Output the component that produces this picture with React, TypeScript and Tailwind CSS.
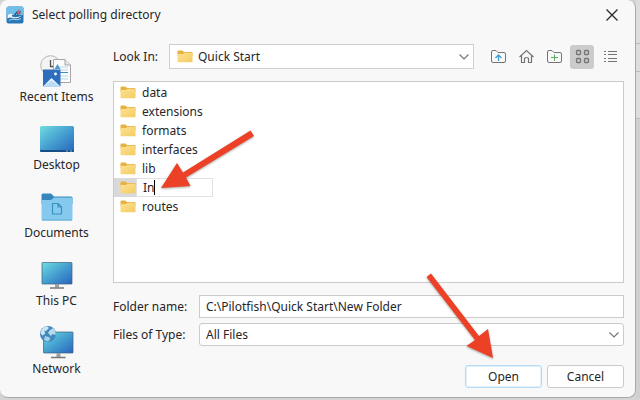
import type { ReactNode } from 'react';
import { useState } from 'react';

function FolderIcon() {
  return (
    <svg viewBox="0 0 16 13" className="h-[13px] w-4 shrink-0" aria-hidden="true">
      <path d="M0.5 1.2Q0.5 0.4 1.3 0.4H5.4L7 1.9H14.7Q15.5 1.9 15.5 2.7V6H0.5Z" fill="#e8b243" />
      <path d="M0.5 4H6L7.6 2.7H14.8Q15.5 2.7 15.5 3.4V11.5Q15.5 12.2 14.8 12.2H1.2Q0.5 12.2 0.5 11.5Z" fill="url(#folder)" />
      <defs>
        <linearGradient id="folder" x1="0" y1="0" x2="1" y2="1">
          <stop offset="0" stopColor="#fde293" />
          <stop offset="1" stopColor="#f4cb62" />
        </linearGradient>
      </defs>
    </svg>
  );
}

function Chevron() {
  return (
    <svg viewBox="0 0 10 6" className="pointer-events-none absolute right-[5px] top-1/2 h-[6px] w-[10px] -translate-y-1/2" fill="none" stroke="#77777b" strokeWidth="1.2" aria-hidden="true">
      <path d="M0.5 0.5L5 5L9.5 0.5" />
    </svg>
  );
}

function ScreenGradient({ id }: { id: string }) {
  return (
    <defs>
      <linearGradient id={id} x1="0" y1="0" x2="1" y2="1">
        <stop offset="0" stopColor="#70dce0" />
        <stop offset="0.5" stopColor="#459fd0" />
        <stop offset="1" stopColor="#2864bd" />
      </linearGradient>
    </defs>
  );
}

function AppIcon() {
  return (
    <svg viewBox="0 0 18 18" className="size-[18px]" aria-hidden="true">
      <rect x="0.5" y="0.5" width="17" height="17" rx="2" fill="#2878b8" />
      <path d="M0.5 2.5Q0.5 0.5 2.5 0.5H15.5Q17.5 0.5 17.5 2.5V9H0.5Z" fill="#70bfe8" />
      <path d="M1.5 9.5Q4 6.5 7 8.5Q5 9 6 10.5Q10 12.5 16 9.5Q12 13 7 12Q3.5 11 1.5 12.5Z" fill="#f2f8fc" />
      <path d="M3 14.5Q6 12.5 9 13.5Q12 14.5 15 12.5" fill="none" stroke="#b8dcf2" strokeWidth="0.9" />
      <path d="M8.5 9L11.5 5.5M11 9.5L14.5 5" stroke="#284c83" strokeWidth="1.2" />
      <path d="M12.5 3.5L13.5 8.5M10.5 7.5L15.5 7" stroke="#c9565c" strokeWidth="1.1" />
    </svg>
  );
}

function RecentIcon() {
  return (
    <svg viewBox="0 0 36 36" className="size-9" aria-hidden="true">
      <circle cx="11.5" cy="13.5" r="9.8" fill="#f4f4f4" stroke="#b6b6b8" />
      <path d="M11.5 8V14.5H16" fill="none" stroke="#555" strokeWidth="1.3" />
      <path d="M14.5 7.5H26L31.5 13V30.5H14.5Z" fill="#fbfbfb" stroke="#a6a6a8" />
      <path d="M26 7.5V13H31.5" fill="#e7e7e7" stroke="#a6a6a8" />
      <path d="M21 15H29M21 18H29M21 24H29M21 27H29" stroke="#b8d9ec" />
      <path d="M21 20.5H29" stroke="#358fc8" />
      <path d="M15.5 17L18.5 12L21.5 17Z" fill="#4b9ad2" />
      <path d="M4 17.5H21.5V34.5H4Z" fill="#2e6fbd" />
      <path d="M4 34.5L12.5 26L21.5 34.5Z" fill="#eaf5ff" />
      <path d="M4 34.5L12.5 28.5L21.5 34.5Z" fill="#b9ddf7" />
      <circle cx="16.5" cy="22" r="1.4" fill="#fff" />
    </svg>
  );
}

function DesktopIcon() {
  return (
    <svg viewBox="0 0 36 36" className="size-9" aria-hidden="true">
      <ScreenGradient id="desk" />
      <rect x="1" y="6" width="34" height="26" rx="1.5" fill="url(#desk)" />
      <path d="M1 30H35V30.5Q35 32 33.5 32H2.5Q1 32 1 30.5Z" fill="#174e86" />
      <path d="M27 31H29M31 31H33" stroke="#8eb7d6" />
    </svg>
  );
}

function DocumentsIcon() {
  return (
    <svg viewBox="0 0 36 36" className="size-9" aria-hidden="true">
      <path d="M2.5 7Q2.5 5.5 4 5.5H12L15 8.5H32Q33.5 8.5 33.5 10V16H2.5Z" fill="#3587bd" />
      <path d="M2.5 12H12L15 9.5H32.5Q33.5 9.5 33.5 10.5V31Q33.5 32.5 32 32.5H4Q2.5 32.5 2.5 31Z" fill="#85c9ee" />
      <path d="M3 32H33" stroke="#63add6" />
      <path d="M13.5 15.5H19L22.5 19V26H13.5ZM19 15.5V19H22.5" fill="none" stroke="#3994bd" strokeWidth="1.2" strokeLinejoin="round" />
    </svg>
  );
}

function ComputerIcon() {
  return (
    <svg viewBox="0 0 36 36" className="size-9" aria-hidden="true">
      <ScreenGradient id="pc" />
      <rect x="3" y="6.5" width="30" height="21.5" rx="0.5" fill="url(#pc)" stroke="#3c607c" strokeWidth="0.7" />
      <path d="M16 28H20V31.5H16Z" fill="#a0a0a3" />
      <path d="M11 32H25" stroke="#77777a" strokeWidth="1.5" />
    </svg>
  );
}

function NetworkIcon() {
  return (
    <svg viewBox="0 0 36 36" className="size-9" aria-hidden="true">
      <ScreenGradient id="net" />
      <rect x="4.5" y="8" width="29.5" height="21" rx="0.5" fill="url(#net)" stroke="#3c607c" strokeWidth="0.7" />
      <path d="M17.5 29H21.5V33H17.5Z" fill="#a0a0a3" />
      <path d="M12 33.5H26.5" stroke="#77777a" strokeWidth="1.5" />
      <circle cx="9" cy="10" r="8" fill="#4289bd" />
      <path d="M2 7Q4 2.5 8 2.2L10 4L7 7L5.5 6.5L6 10L3.5 11.5L1.3 9Z" fill="#cce6f3" />
      <path d="M11 6L14.5 4Q17 7 16.8 11L13.5 10L12 12L9 9Z" fill="#b9dcec" />
      <path d="M6 12L10 13L11.5 15L9 17.5Q6 17 5 15.5Z" fill="#a4cee5" />
    </svg>
  );
}

const places: { label: string; icon: ReactNode }[] = [
  { label: 'Recent Items', icon: <RecentIcon /> },
  { label: 'Desktop', icon: <DesktopIcon /> },
  { label: 'Documents', icon: <DocumentsIcon /> },
  { label: 'This PC', icon: <ComputerIcon /> },
  { label: 'Network', icon: <NetworkIcon /> },
];

const folderOutline = 'M1.5 3Q1.5 1.5 3 1.5H6L8 3.5H14Q15.5 3.5 15.5 5V12Q15.5 13.5 14 13.5H3Q1.5 13.5 1.5 12Z';

const tools: { label: string; active?: boolean; icon: ReactNode }[] = [
  {
    label: 'Up one level',
    icon: (
      <>
        <path d={folderOutline} />
        <path d="M8.5 12V6.5M5.5 9L8.5 6L11.5 9" stroke="#429bd3" strokeWidth="1.3" />
      </>
    ),
  },
  { label: 'Home', icon: <path d="M1.5 8L8.5 1.5L15.5 8M3.5 6.5V13.5H6.5V9.5Q6.5 8.5 8.5 8.5T10.5 9.5V13.5H13.5V6.5" strokeWidth="1.2" /> },
  {
    label: 'New folder',
    icon: (
      <>
        <path d={folderOutline} />
        <path d="M8.5 5.5V12M5 8.5H12" stroke="#5bad62" />
      </>
    ),
  },
  {
    label: 'Icon view',
    active: true,
    icon: (
      <>
        <rect x="2.5" y="1.5" width="4" height="4" rx="1" strokeWidth="1.3" />
        <rect x="10.5" y="1.5" width="4" height="4" rx="1" strokeWidth="1.3" />
        <rect x="2.5" y="9.5" width="4" height="4" rx="1" strokeWidth="1.3" />
        <rect x="10.5" y="9.5" width="4" height="4" rx="1" strokeWidth="1.3" />
      </>
    ),
  },
  { label: 'List view', icon: <path d="M2 2.5H4M6 2.5H15M2 5.5H4M6 5.5H15M2 9.5H4M6 9.5H15M2 12.5H4M6 12.5H15" /> },
];

const folders = ['data', 'extensions', 'formats', 'interfaces', 'lib', 'In', 'routes'];

function Arrows() {
  return (
    <svg width="640" height="400" className="pointer-events-none absolute left-0 top-0 drop-shadow-[0_1px_1px_rgba(0,0,0,0.35)]" fill="#ec4126" aria-hidden="true">
      <path d="M161 188L177 163L183 172.5L250.5 130.5L254 136L186 177.5L190.5 186Z" />
      <path d="M493 358L466.5 346L475 340L426.5 277L431 273.5L479 336L488 329Z" />
    </svg>
  );
}

export default function App() {
  const [draft, setDraft] = useState('In');
  const [path, setPath] = useState('C:\\Pilotfish\\Quick Start\\New Folder');

  return (
    <div className="relative flex min-h-screen bg-[#d4d4d4] pb-[2px] font-['Noto_Sans','Open_Sans',sans-serif] text-[12px] leading-[18px] text-[#262628]">
      <main className="flex min-w-0 flex-1 flex-col rounded-lg border-b border-r border-[#a9a9a9] bg-[#f8f8f8]">
        <header className="flex h-[30px] shrink-0 items-center gap-2 pl-[6px] pr-[17px]">
          <AppIcon />
          <h1 className="flex-1">Select polling directory</h1>
          <button type="button" aria-label="Close">
            <svg viewBox="0 0 12 12" className="size-3" stroke="#29292c" strokeWidth="1.3">
              <path d="M0.5 0.5L11.5 11.5M11.5 0.5L0.5 11.5" />
            </svg>
          </button>
        </header>

        <div className="flex flex-1">
          {/* Places */}
          <nav className="flex w-[113px] shrink-0 flex-col gap-[14px] pt-[22px]">
            {places.map((place) => (
              <button key={place.label} type="button" className="flex flex-col items-center">
                {place.icon}
                <span>{place.label}</span>
              </button>
            ))}
          </nav>

          <section className="flex min-w-0 flex-1 flex-col pb-[9px] pr-[11px] pt-[14px]">
            {/* Location + toolbar */}
            <div className="flex h-[25px] items-center">
              <label htmlFor="look-in" className="w-14 shrink-0">Look In:</label>
              <div className="relative flex-1">
                <div className="pointer-events-none absolute left-2 top-[6px]">
                  <FolderIcon />
                </div>
                <select id="look-in" className="h-[25px] w-full appearance-none border border-[#cfcfcf] bg-white pl-7">
                  <option>Quick Start</option>
                </select>
                <Chevron />
              </div>
              <div className="flex gap-1 pl-3 pr-[2px]">
                {tools.map((tool) => (
                  <button
                    key={tool.label}
                    type="button"
                    aria-label={tool.label}
                    className={`flex h-6 w-6 items-center justify-center rounded-[3px] ${tool.active ? 'bg-[#cbcbcb]' : ''}`}
                  >
                    <svg viewBox="0 0 17 15" className="h-[15px] w-[17px]" fill="none" stroke="#747477">
                      {tool.icon}
                    </svg>
                  </button>
                ))}
              </div>
            </div>

            {/* Folder list */}
            <ul className="mt-3 min-h-[202px] flex-1 border border-[#cbcbcb] bg-white pt-px">
              {folders.map((name) =>
                name === 'In' ? (
                  <li key={name} className="flex h-[19px] items-center">
                    <div className="flex h-full w-[22px] items-center bg-[#d9d9d9] pl-[6px]">
                      <FolderIcon />
                    </div>
                    <div className="relative h-full">
                      <input
                        aria-label="New folder name"
                        value={draft}
                        onChange={(e) => setDraft(e.target.value)}
                        className="block h-full w-[77px] border border-[#e1e1e1] bg-white pl-[6px] outline-none"
                      />
                      <span className="absolute left-[18px] top-[2px] h-[15px] w-px bg-black" />
                    </div>
                  </li>
                ) : (
                  <li key={name} className="flex h-[19px] items-center gap-[6px] pl-[6px]">
                    <FolderIcon />
                    {name}
                  </li>
                )
              )}
            </ul>

            <div className="mt-3 flex items-center">
              <label htmlFor="folder-name" className="w-[86px] shrink-0">Folder name:</label>
              <input
                id="folder-name"
                value={path}
                onChange={(e) => setPath(e.target.value)}
                className="h-[23px] min-w-0 flex-1 border border-[#cbcbcb] bg-white px-[6px]"
              />
            </div>
            <div className="mt-[5px] flex items-center">
              <label htmlFor="file-type" className="w-[86px] shrink-0">Files of Type:</label>
              <div className="relative flex-1">
                <select id="file-type" className="block h-[23px] w-full appearance-none rounded-[3px] border border-[#cbcbcb] bg-white px-[6px]">
                  <option>All Files</option>
                </select>
                <Chevron />
              </div>
            </div>

            <div className="mt-[19px] flex justify-end gap-[5px]">
              <button type="button" className="h-[23px] w-[77px] rounded-[3px] border border-[#b4dcf8] bg-white ring-1 ring-inset ring-[#e0f1fc]">Open</button>
              <button type="button" className="h-[23px] w-[77px] rounded-[3px] border border-[#cbcbcb] bg-white">Cancel</button>
            </div>
          </section>
        </div>
      </main>

      {/* Edge of the window behind the dialog */}
      <aside className="flex w-1 shrink-0 flex-col divide-y divide-[#bdbdbd] bg-[#dedede]">
        <div className="h-11" />
        <div className="h-7" />
        <div className="h-[47px]" />
        <div className="flex-1 bg-[#d0d0d0]" />
      </aside>
      <Arrows />
    </div>
  );
}
